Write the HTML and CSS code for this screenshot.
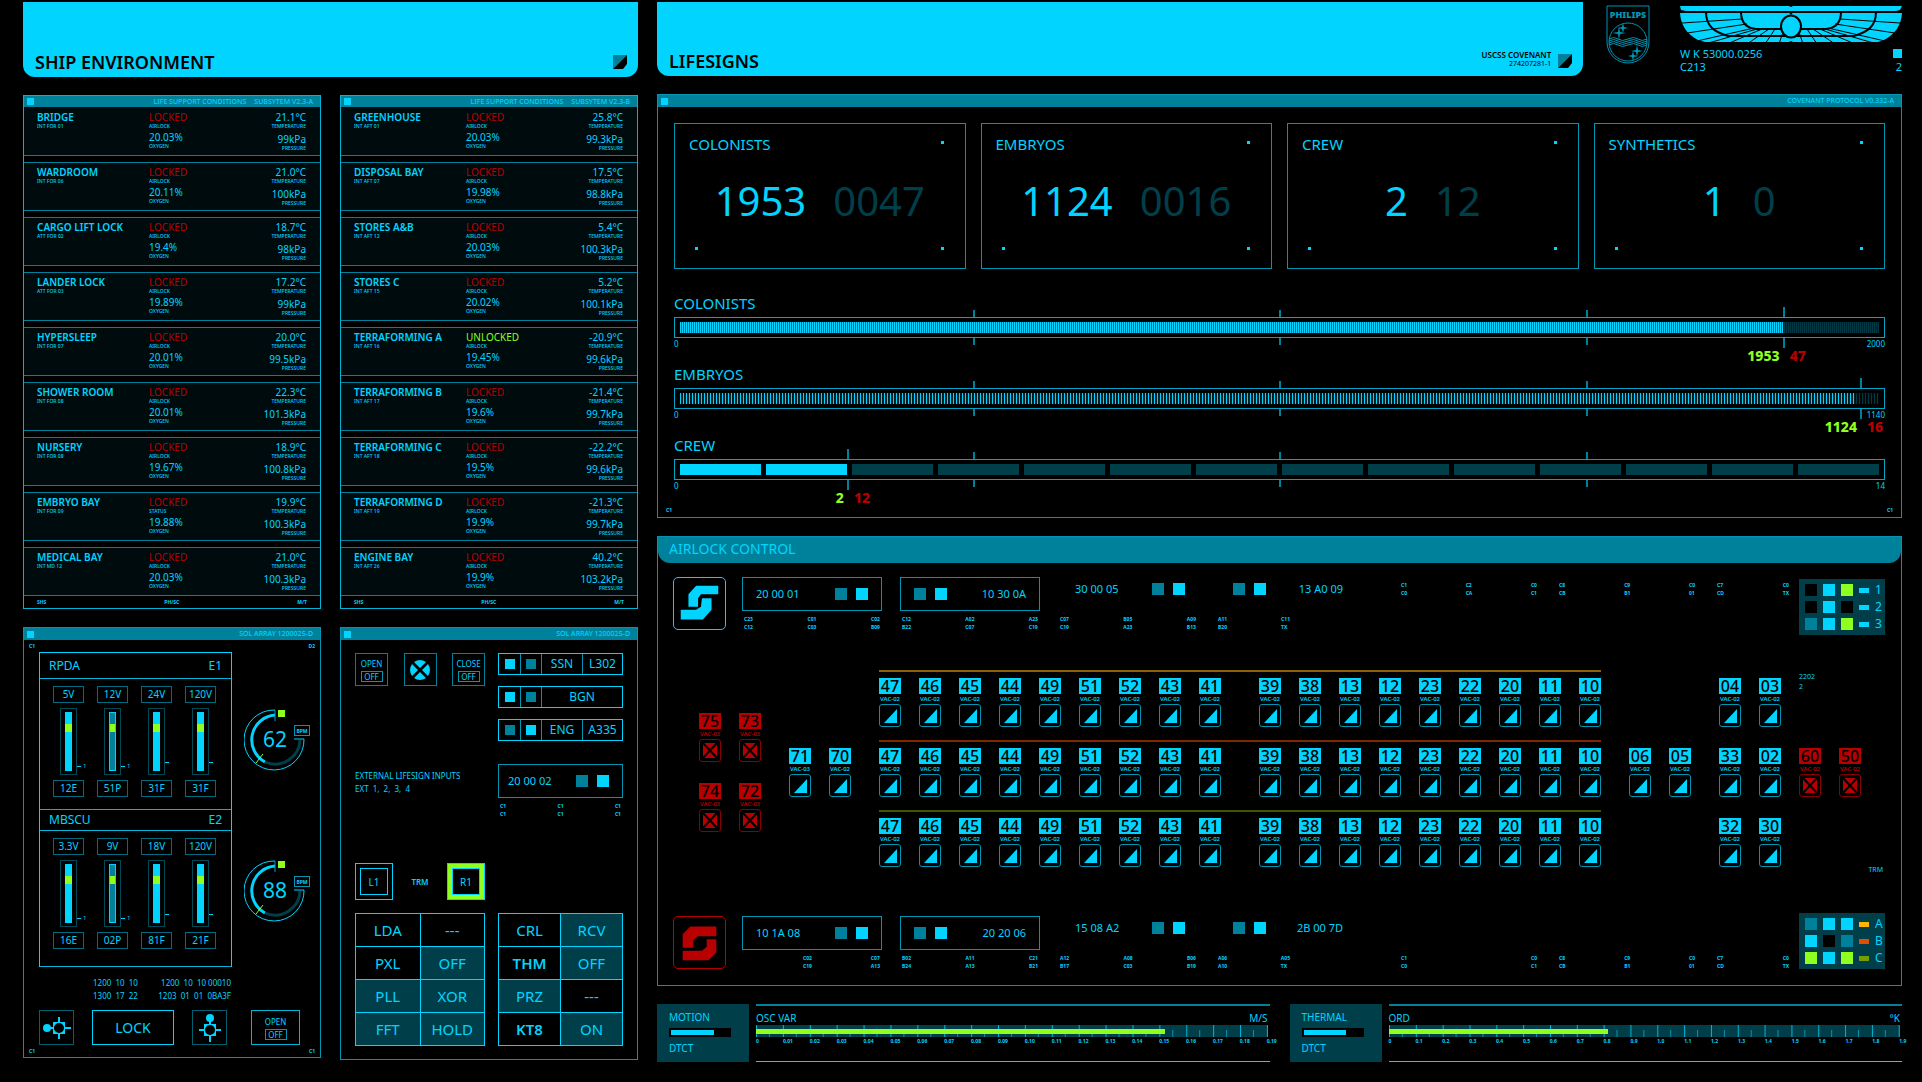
FILE: index.html
```html
<!DOCTYPE html>
<html lang="en">
<head>
<meta charset="utf-8">
<title>Lifesigns</title>
<link rel="stylesheet" href="styles.css">
</head>
<body>
<svg class="defs" width="0" height="0" aria-hidden="true">
  <symbol id="corner" viewBox="0 0 14 14"><path d="M0 0h14L0 14z" fill="#00819b"/><path d="M14 0v9l-4 5H0z" fill="#000"/></symbol>
  <symbol id="port" viewBox="0 0 34 34">
    <circle cx="7" cy="17" r="4"/><path d="M10 16h4v2h-4zM18 6h2v5h-2zM18 23h2v5h-2zM25 16h6v2h-6z"/>
    <path fill-rule="evenodd" d="M13 11h12v12H13zM19 12a5 5 0 1 0 0 10a5 5 0 1 0 0-10z"/>
  </symbol>
</svg>
<main class="console">
  <section class="side">
    <header class="banner">
      <h1>SHIP ENVIRONMENT</h1>
      <svg class="corner"><use href="#corner"/></svg>
    </header>
    <div class="pair">
      <section class="panel env" data-env="a">
        <h2 class="bar"><i class="pip"></i><span>LIFE SUPPORT CONDITIONS</span><span>SUBSYTEM V2.3-A</span></h2>
        <div class="rooms"></div>
        <div class="foot"><span>SHS</span><span>PH/SC</span><span>M/T</span></div>
      </section>
      <section class="panel env" data-env="b">
        <h2 class="bar"><i class="pip"></i><span>LIFE SUPPORT CONDITIONS</span><span>SUBSYTEM V2.3-B</span></h2>
        <div class="rooms"></div>
        <div class="foot"><span>SHS</span><span>PH/SC</span><span>M/T</span></div>
      </section>
    </div>
    <div class="pair sol">
      <section class="panel">
        <h2 class="bar"><i class="pip"></i><span>SOL ARRAY 1200025-D</span></h2>
        <div class="marks"><span>C1</span><span>D2</span></div>
        <div class="power">
          <div class="rack">
            <h3><span>RPDA</span><span>E1</span></h3>
            <div class="faders" data-faders="5V,12E|12V,51P|24V,31F|120V,31F"></div>
            <h3><span>MBSCU</span><span>E2</span></h3>
            <div class="faders" data-faders="3.3V,16E|9V,02P|18V,81F|120V,21F"></div>
          </div>
          <div class="dials">
            <svg viewBox="0 0 68 62"><use href="#dial"/><text class="dial-value" x="31" y="38" text-anchor="middle">62</text></svg>
            <svg viewBox="0 0 68 62">
              <g id="dial">
                <path d="M31 1A30 30 0 1 0 60 30H50" fill="none" stroke="#00d4ff"/>
                <path d="M31 6A25 25 0 0 0 21 53" fill="none" stroke="#00d4ff" stroke-width="3"/>
                <path d="M31 1v11" stroke="#00a0c0"/>
                <path d="M21 53A25 25 0 0 0 56 31" fill="none" stroke="#003f4a" stroke-width="3"/>
                <path d="M12 54l7-9" stroke="#8fff1f"/>
                <rect x="34" y="1" width="7" height="7" fill="#8fff1f"/>
                <rect x="50.500" y="16.500" width="15" height="10" fill="#000" stroke="#0095b3"/>
                <text class="dial-unit" x="58" y="24" text-anchor="middle">BPM</text>
              </g>
              <text class="dial-value" x="31" y="38" text-anchor="middle">88</text>
            </svg>
          </div>
        </div>
        <div class="serials">
          <p>1200  10  10<br>1300  17  22</p>
          <p>1200  10  10 00010<br>1203  01  01  0BA3F</p>
        </div>
        <div class="controls">
          <button class="key dim" aria-label="Port left"><svg width="34" height="34"><use href="#port"/></svg></button>
          <button class="key lock">LOCK</button>
          <button class="key dim" aria-label="Port up"><svg class="turn" width="34" height="34"><use href="#port"/></svg></button>
          <button class="key toggle wide">OPEN<b>OFF</b></button>
        </div>
        <div class="marks"><span>C1</span><span>C1</span></div>
      </section>
      <section class="panel">
        <h2 class="bar"><i class="pip"></i><span>SOL ARRAY 1200025-D</span></h2>
        <div class="deck">
          <div class="toggles">
            <button class="key toggle">OPEN<b>OFF</b></button>
            <button class="key toggle" aria-label="Fan"><svg width="22" height="22" viewBox="0 0 22 22"><path d="M11 9L5 3Q11-1 17 3zM11 13l6 6q-6 4-12 0zM9 11l-6 6q-4-6 0-12zM13 11l6-6q4 6 0 12z"/></svg></button>
            <button class="key toggle">CLOSE<b>OFF</b></button>
          </div>
          <div class="links">
            <div class="link"><i class="on"></i><i></i><span>SSN</span><span>L302</span></div>
            <div class="link"><i class="on"></i><i></i><span class="both">BGN</span></div>
            <div class="link"><i></i><i class="on"></i><span>ENG</span><span>A335</span></div>
          </div>
          <p class="note">EXTERNAL LIFESIGN INPUTS<br>EXT  1,  2,  3,  4</p>
          <div data-module="20 00 02" data-codes="C1 C1|C1 C1|C1 C1"></div>
          <div class="sides">
            <button class="key square"><b>L1</b></button><span>TRM</span><button class="key square active"><b>R1</b></button>
          </div>
          <div></div>
          <div class="keypad">
            <button>LDA</button><button>---</button><button>PXL</button><button class="set">OFF</button>
            <button class="set">PLL</button><button class="set">XOR</button><button class="set">FFT</button><button class="set">HOLD</button>
          </div>
          <div class="keypad">
            <button>CRL</button><button class="set">RCV</button><button class="strong">THM</button><button class="set">OFF</button>
            <button class="set">PRZ</button><button>---</button><button class="strong">KT8</button><button class="set">ON</button>
          </div>
        </div>
      </section>
    </div>
  </section>

  <section class="main">
    <div class="top">
      <header class="banner">
        <h1>LIFESIGNS</h1>
        <p><b>USCSS COVENANT</b><br>274207281-1</p>
        <svg class="corner"><use href="#corner"/></svg>
      </header>
      <svg class="shield" width="44" height="59" viewBox="0 0 44 59" fill="none" stroke="#0095b3">
        <path d="M1 1h42v36a21 21 0 0 1-42 0z"/>
        <text x="22" y="13" text-anchor="middle">PHILIPS</text>
        <circle cx="22" cy="37" r="19"/>
        <path d="M3 34q5-3 9 0t10 0 10 0 9 0M3 36q5-3 9 0t10 0 10 0 9 0M3 38q5-3 9 0t10 0 10 0 9 0M3 40q5-3 9 0t10 0 10 0 9 0"/>
        <path fill="#0095b3" stroke="none" d="M13 21l1 6 6 1-6 1-1 6-1-6-6-1 6-1zM17 18l1 4 4 1-4 1-1 4-1-4-4-1 4-1zM31 40l1 5 5 1-5 1-1 5-1-5-5-1 5-1zM27 46l1 4 4 1-4 1-1 4-1-4-4-1 4-1z"/>
      </svg>
      <div class="vessel">
        <svg class="wings" viewBox="0 0 222 37">
          <path fill="#00d4ff" d="M0 0h109l2 1 2-1h109l-2 4-4 1H6L1 4zM0 7h222q-1 18-18 27l-6 2h-85l-2-1-2 1H25l-7-2Q1 25 0 7z"/>
          <g fill="none" stroke="#000" stroke-width="2">
            <g id="wing">
              <path d="M26 6c0 14 8 20 22 24h62M61 6c0 10 5 16 15 17h26"/>
              <path stroke-width="1" d="M2 17l60-4M7 27l60-9M17 35l57-13M25 38l52-15M47 38l35-15M67 38l22-15M85 38l10-15M99 38l5-15"/>
            </g>
            <use href="#wing" transform="translate(222 0) scale(-1 1)"/>
          </g>
          <ellipse cx="111" cy="20.500" rx="10" ry="11" fill="#00d4ff" stroke="#000" stroke-width="2"/>
          <path d="M108 5h6l-3 4z"/>
        </svg>
        <div class="ids"><p>W K 53000.0256<br>C213</p><p class="seq"><i></i>2</p></div>
      </div>
    </div>

    <section class="panel life">
      <h2 class="bar"><i class="pip"></i><span>COVENANT PROTOCOL V0.332-A</span></h2>
      <div class="cards">
        <article class="card"><h3>COLONISTS</h3><p><span>1953</span><span>0047</span></p></article>
        <article class="card"><h3>EMBRYOS</h3><p><span>1124</span><span>0016</span></p></article>
        <article class="card"><h3>CREW</h3><p><span>2</span><span>12</span></p></article>
        <article class="card"><h3>SYNTHETICS</h3><p><span>1</span><span>0</span></p></article>
      </div>
      <div class="gauge">
        <h3>COLONISTS</h3>
        <div class="track" style="--at:91.7%"><div class="fill fine"></div><i></i><i></i><i></i><u></u><b>1953</b><em>47</em></div>
        <div class="ends"><span>0</span><span>2000</span></div>
      </div>
      <div class="gauge">
        <h3>EMBRYOS</h3>
        <div class="track" style="--at:98.1%"><div class="fill coarse"></div><i></i><i></i><i></i><u></u><b>1124</b><em>16</em></div>
        <div class="ends"><span>0</span><span>1140</span></div>
      </div>
      <div class="gauge">
        <h3>CREW</h3>
        <div class="track" style="--at:14.3%"><div class="cells" id="crew"></div><i></i><i></i><i></i><u></u><b>2</b><em>12</em></div>
        <div class="ends"><span>0</span><span>14</span></div>
      </div>
      <div class="marks"><span>C1</span><span>C1</span></div>
    </section>

    <section class="panel airlock">
      <h2>AIRLOCK CONTROL</h2>
      <div class="strip">
        <svg class="badge" viewBox="0 0 53 53"><path d="M15 17l8-9h23v9H28l-3 4v9H15zM29 21h10v12l-9 10H7V33h16l5-3z"/></svg>
        <div data-module="20 00 01" data-codes="C23 C12|C01 C03|C02 B09"></div>
        <div data-module="10 30 0A" class="flip" data-codes="C12 B22|A02 C07|A23 C19"></div>
        <div data-module="30 00 05" class="bare" data-codes="C07 C19|B05 A23|A09 B13"></div>
        <div data-module="13 A0 09" class="bare flip last" data-codes="A11 B20|C11 TX"></div>
        <div class="buses">
          <div class="codes" data-codes="C1 C0|C2 CA|C0 C1"></div>
          <div class="codes" data-codes="C8 CB|C9 B1|C0 01"></div>
          <div class="codes short" data-codes="C7 CD|C0 TX"></div>
        </div>
        <div class="matrix" data-matrix="kcg,c,1|kck,c,2|tcg,c,3"></div>
      </div>
      <div class="plan" id="plan"></div>
      <div class="strip lower">
        <svg class="badge alert" viewBox="0 0 53 53"><path d="M9 18l8-8h27v10H25l-5 4v8H9zM34 23h10v14l-8 8H9V35h20l5-4z"/></svg>
        <div data-module="10 1A 08" data-codes="|C02 C19|C07 A13"></div>
        <div data-module="20 20 06" class="flip" data-codes="B02 B24|A11 A13|C21 B21"></div>
        <div data-module="15 08 A2" class="bare" data-codes="A12 B17|A08 C03|B06 B19"></div>
        <div data-module="2B 00 7D" class="bare flip last" data-codes="A06 A10|A05 TX"></div>
        <div class="buses">
          <div class="codes" data-codes="C1 C0||C0 C1"></div>
          <div class="codes" data-codes="C8 CB|C9 B1|C0 01"></div>
          <div class="codes short" data-codes="C7 CD|C0 TX"></div>
        </div>
        <div class="matrix" data-matrix="tcc,a,A|ckt,o,B|gcg,v,C"></div>
      </div>
    </section>

    <div class="detectors">
      <section class="detector">
        <div class="tag"><h3>MOTION</h3><div class="level"><i></i></div><p>DTCT</p></div>
        <div class="scale"><p><span>OSC VAR</span><span>M/S</span></p><div class="ruler"><i style="width:80%"></i></div><div class="ticks" data-step="0.01"></div></div>
      </section>
      <section class="detector">
        <div class="tag"><h3>THERMAL</h3><div class="level"><i></i></div><p>DTCT</p></div>
        <div class="scale"><p><span>ORD</span><span>°K</span></p><div class="ruler"><i style="width:43%"></i></div><div class="ticks" data-step="0.1"></div></div>
      </section>
    </div>
  </section>
</main>
<script src="app.js"></script>
</body>
</html>
```
FILE: styles.css
```css
:root {
  --cyan: #00d4ff;
  --line: #0095b3;
  --teal: #00819b;
  --deep: #003f4a;
  --green: #8fff1f;
  --red: #b80000;
}
* { box-sizing: border-box; }
body {
  margin: 0;
  background: #000;
  color: var(--cyan);
  font-family: "Noto Sans", "Open Sans", sans-serif;
  font-size: 10px;
  line-height: 12px;
}
h1, h2, h3, p { margin: 0; font-weight: 400; font-size: inherit; }
i, em { font-style: normal; }
button { font: inherit; color: inherit; background: none; padding: 0; border: 1px solid var(--line); }
.defs { position: absolute; }
.console {
  display: grid;
  grid-template-columns: 615fr 1245fr;
  gap: 19px;
  padding: 2px 20px 20px 23px;
}
.side, .main { display: flex; flex-direction: column; gap: 18px; min-width: 0; }
.banner {
  display: flex;
  align-items: flex-end;
  justify-content: space-between;
  gap: 7px;
  height: 75px;
  padding: 0 11px 8px 12px;
  background: var(--cyan);
  color: #000;
  border-radius: 0 0 12px 12px;
}
.banner h1 { flex: 1; font-size: 18px; line-height: 14px; font-weight: 600; }
.banner p { font-size: 7px; line-height: 8px; text-align: right; }
.banner b { font-size: 8px; font-weight: 600; }
.corner { width: 14px; height: 14px; }

.pair { display: grid; grid-template-columns: 1fr 1fr; gap: 19px; align-items: start; }
.panel { border: 1px solid var(--line); }
.env { border-color: #00b4d8; }
.bar {
  display: flex;
  justify-content: flex-end;
  align-items: center;
  gap: 8px;
  height: 12px;
  padding: 0 7px 0 3px;
  background: var(--teal);
  font-size: 7px;
  line-height: 12px;
  font-weight: 500;
}
.env .bar { height: 11px; }
.pip { width: 7px; height: 7px; margin-right: auto; background: var(--cyan); }

/* Life support rooms */
.rooms { display: grid; gap: 6px; }
.room {
  display: grid;
  grid-template-columns: 112px 1fr auto;
  height: 49px;
  padding: 3px 14px 0 13px;
  border: solid var(--teal);
  border-width: 1px 0;
  background: #000b0e;
}
.room:first-child { border-top-color: transparent; }
.room h3 { font-weight: 600; }
.room small { display: block; font-size: 5px; line-height: 6px; font-weight: 500; }
.room .air { margin-top: 2px; }
.room .kpa { margin-top: 4px; }
.room div:last-child { text-align: right; }
.locked { color: var(--red); }
.unlocked { color: var(--green); }
.foot { display: flex; justify-content: space-between; padding: 0 13px; font-size: 5px; line-height: 12px; font-weight: 700; }

/* Power panel */
.marks { display: flex; justify-content: space-between; padding: 0 5px; font-size: 5px; line-height: 12px; font-weight: 700; }
.power { display: flex; gap: 12px; padding-left: 15px; }
.rack { width: 193px; border: 1px solid var(--cyan); border-bottom: 0; }
.rack h3 {
  display: flex;
  justify-content: space-between;
  height: 21px;
  padding: 0 9px;
  border-bottom: 1px solid #00b4d8;
  font-size: 12px;
  line-height: 20px;
}
.rack h3:first-child { height: 26px; line-height: 25px; }
.faders { display: flex; justify-content: space-between; padding: 7px 15px 12px 13px; border-bottom: 1px solid #00b4d8; }
.faders:last-child { padding-bottom: 17px; }
.fader { display: grid; gap: 5px; width: 31px; justify-items: center; font-size: 10px; }
.fader output, .fader label { width: 31px; height: 17px; border: 1px solid #006b80; line-height: 15px; text-align: center; }
.slot { position: relative; width: 17px; height: 67px; padding: 3px 4px; border: 1px solid #004a57; }
.slot input {
  appearance: none;
  display: block;
  writing-mode: vertical-lr;
  direction: rtl;
  width: 7px;
  height: 59px;
  margin: 0;
  background: var(--cyan);
}
.slot input::-webkit-slider-thumb { appearance: none; width: 7px; height: 8px; background: var(--green); }
.fader.half input { background: var(--teal); outline: 1px solid var(--cyan); outline-offset: -1px; }
.slot span { position: absolute; left: 16px; top: 53px; font-size: 6px; line-height: 8px; display: flex; align-items: center; gap: 2px; }
.slot span::before { content: ""; width: 4px; height: 1px; background: var(--cyan); }
.dials { display: grid; padding-top: 12px; }
.dials svg { width: 68px; height: 62px; align-self: center; fill: var(--cyan); }
.dial-value { font-size: 21px; }
.dial-unit { font-size: 5px; font-weight: 700; }
.serials { display: flex; justify-content: space-between; padding: 9px 89px 0 69px; font-size: 8px; line-height: 13px; white-space: pre; }
.serials p:last-child { text-align: right; }
.controls { display: flex; gap: 18px; padding: 8px 20px 0 15px; }
.key.dim { width: 35px; height: 35px; border-color: #00606f; }
.key svg { display: block; margin: auto; fill: var(--cyan); }
.turn { transform: rotate(90deg); }
.lock { width: 82px; font-size: 14px; border-color: var(--cyan); }
.toggle { width: 33px; height: 33px; font-size: 8px; line-height: 11px; border-color: var(--teal); }
.toggle b { display: block; width: 22px; margin: 2px auto 0; border: 1px solid var(--line); font-weight: 400; line-height: 9px; }
.toggle.wide { width: 49px; height: 35px; margin-left: auto; border-color: #00b4d8; }

/* Deck panel */
.deck {
  display: grid;
  grid-template-columns: 130fr 125fr;
  grid-template-rows: 111px 99px 50px auto;
  column-gap: 13px;
  align-items: start;
  padding: 13px 14px 13px;
}
.toggles, .sides { display: flex; justify-content: space-between; align-items: center; }
.links { display: grid; gap: 11px; }
.link { display: grid; grid-template-columns: 21px 21px 41px 1fr; height: 22px; border: 1px solid var(--cyan); font-size: 12px; line-height: 20px; text-align: center; }
.link > * + * { border-left: 1px solid var(--line); }
.link .both { grid-column: 3 / 5; }
.link i { display: grid; place-items: center; }
.link i::after { content: ""; width: 10px; height: 10px; background: var(--teal); }
.link i.on::after { background: var(--cyan); }
.note { padding-top: 5px; font-size: 8px; line-height: 13px; white-space: pre; }
.sides { font-size: 8px; font-weight: 600; }
.square { width: 38px; height: 37px; padding: 4px; border-color: var(--cyan); font-size: 10px; }
.square b { display: grid; place-items: center; height: 27px; border: 1px solid var(--cyan); background: #000; font-weight: 400; }
.square.active { background: var(--green); }
.keypad { display: grid; grid-template-columns: 1fr 1fr; gap: 1px; padding: 1px; background: var(--cyan); }
.keypad button { height: 32px; border: 0; background: #000; font-size: 15px; }
.keypad .set { background: var(--deep); }
.keypad .strong { font-weight: 600; }

/* Module boxes and wiring codes */
.module { display: flex; align-items: center; gap: 9px; height: 34px; padding: 0 13px 0 9px; border: 1px solid var(--line); font-size: 11px; }
.module span { margin-right: auto; }
.module i { width: 12px; height: 12px; background: var(--teal); }
.module i + i { background: var(--cyan); }
.codes { display: flex; justify-content: space-between; font-size: 5px; line-height: 8px; font-weight: 700; }
.module + .codes { padding: 4px 2px 0; }

/* Top right */
.top { display: flex; justify-content: space-between; }
.main .banner { width: 74.4%; height: 74px; }
.shield { margin: 3px 8px 0 0; }
.shield text { font-size: 9px; font-weight: 900; fill: var(--line); stroke: none; }
.vessel { width: 222px; padding-top: 4px; }
.wings { display: block; width: 100%; }
.ids { display: flex; justify-content: space-between; padding-top: 4px; font-size: 11px; line-height: 13px; }
.seq { display: grid; justify-items: end; }
.seq i { width: 9px; height: 9px; margin: 2px 0; background: var(--cyan); }

/* Lifesigns */
.cards { display: grid; grid-template-columns: repeat(4, 1fr); gap: 15px; padding: 16px 16px 21px; }
.card {
  height: 146px;
  padding: 11px 14px;
  border: 1px solid var(--line);
  font-size: 15px;
  line-height: 18px;
  background:
    linear-gradient(var(--cyan), var(--cyan)) right 21px top 17px / 3px 3px no-repeat,
    linear-gradient(var(--cyan), var(--cyan)) right 21px bottom 18px / 3px 3px no-repeat,
    linear-gradient(var(--cyan), var(--cyan)) left 20px bottom 18px / 3px 3px no-repeat;
}
.card p { display: flex; justify-content: center; gap: 27px; padding-top: 24px; font-size: 40px; line-height: 48px; }
.card p span + span { color: var(--deep); }
.gauge { padding: 3px 16px; }
.gauge h3 { font-size: 15px; line-height: 20px; padding-bottom: 4px; }
.track { position: relative; height: 21px; padding: 4px 5px; border: 1px solid #00a5c7; }
.fill { height: 11px; }
.fine { background: linear-gradient(90deg, transparent 92%, #000b 92%), repeating-linear-gradient(90deg, var(--cyan) 0 1px, #006b80 1px 2px); }
.coarse { background: linear-gradient(90deg, transparent 98%, #000b 98%), repeating-linear-gradient(90deg, var(--cyan) 0 1px, #002026 1px 3px); }
.cells { display: grid; grid-template-columns: repeat(14, 1fr); gap: 5px; height: 11px; }
.cells span { background: var(--deep); }
.cells span:nth-child(-n+2) { background: var(--cyan); }
.track > i, .track > u {
  position: absolute;
  top: -8px;
  bottom: -8px;
  width: 2px;
  margin-left: -1px;
  background: linear-gradient(var(--teal) 7px, transparent 7px calc(100% - 7px), var(--teal) calc(100% - 7px));
}
.track > i:nth-of-type(1) { left: 24.7%; }
.track > i:nth-of-type(2) { left: 50%; }
.track > i:nth-of-type(3) { left: 75.4%; }
.track > u {
  left: var(--at);
  top: -11px;
  bottom: -11px;
  background: linear-gradient(var(--teal) 10px, transparent 10px calc(100% - 10px), var(--teal) calc(100% - 10px));
}
.track b, .track em { position: absolute; top: 29px; font-size: 14px; line-height: 18px; font-weight: 800; }
.track b { right: calc(100% - var(--at) + 4px); color: var(--green); }
.track em { left: calc(var(--at) + 6px); color: var(--red); }
.ends { display: flex; justify-content: space-between; font-size: 8px; line-height: 11px; padding-bottom: 9px; }
.life .marks { padding: 0 8px; line-height: 14px; }

/* Airlock */
.airlock > h2 { height: 26px; padding-left: 11px; border-radius: 0 0 12px 12px; background: var(--teal); font-size: 14px; line-height: 24px; }
.strip { display: flex; padding: 14px 16px 0 15px; }
.badge { width: 53px; height: 53px; margin-right: 16px; border: 1px solid var(--cyan); border-radius: 5px; fill: var(--cyan); }
.badge.alert { border-color: var(--red); fill: var(--red); }
.strip > [data-module] { width: 140px; margin-right: 18px; }
.strip .module { padding: 0 13px; }
.flip .module { flex-direction: row-reverse; }
.flip .module span { margin: 0 0 0 auto; }
.flip .module i { background: var(--cyan); }
.flip .module i + i { background: var(--teal); }
.strip .bare .module { height: 24px; margin-bottom: 10px; padding: 0 13px 0 17px; border: 0; }
.strip > .last { width: 140px; margin-right: 45px; }
.last .codes { width: 76px; }
.buses { display: flex; gap: 22px; padding-top: 4px; }
.buses .codes { width: 136px; }
.buses .codes.short { width: 72px; }
.matrix { display: grid; gap: 5px; align-content: center; height: 56px; margin: 2px 0 0 auto; padding: 0 3px 0 6px; background: var(--deep); font-size: 12px; line-height: 12px; }
.matrix div { display: flex; align-items: center; gap: 6px; }
.matrix i { width: 12px; height: 12px; }
.matrix u { width: 10px; height: 5px; }
.matrix span { width: 7px; text-align: center; }
.k { background: #000; } .c { background: var(--cyan); } .t { background: var(--teal); } .g { background: var(--green); }
.a { background: #ffb400; } .o { background: #dc5000; } .v { background: #73a000; }
.lower { padding: 41px 16px 15px 15px; }
.lower .buses { padding-top: 38px; }
.lower .matrix { margin-top: -3px; }

.plan { display: flex; align-items: center; padding: 35px 0 0 41px; }
.group { display: grid; gap: 21px; margin-right: 28px; }
.hull { gap: 0; }
.row { display: flex; gap: 18px; }
.hull .row { padding: 6px 0 13px; border-top: 2px solid #8a6400; }
.hull .row:last-child { padding-bottom: 8px; }
.row .gap { width: 2px; }
.hull .rust { border-color: #7d2800; }
.hull .moss { border-color: #3f5500; }
.node { width: 22px; font-size: 6px; line-height: 10px; text-align: center; white-space: nowrap; }
.node b { display: block; height: 16px; background: var(--cyan); color: #000; font-size: 16px; line-height: 16px; font-weight: 500; }
.node span { display: flex; justify-content: center; font-weight: 600; }
.node svg { display: block; width: 22px; height: 23px; border: 1px solid var(--line); border-radius: 3px; fill: var(--cyan); }
.node.shut { color: var(--red); }
.node.shut b { background: var(--red); }
.node.shut svg { border-color: #8a0000; fill: var(--red); stroke: #000; }
.stern { margin-right: 18px; }
.tail { display: flex; flex-direction: column; align-self: stretch; justify-content: space-between; flex: 1; font-size: 7px; line-height: 10px; font-weight: 600; }
.tail p { height: 22px; padding-top: 2px; }
.tail .trm { padding: 12px 18px 0 0; text-align: right; }

/* Detectors */
.detectors { display: grid; grid-template-columns: 1fr 1fr; gap: 20px; }
.detector { display: flex; gap: 7px; }
.tag { width: 92px; height: 58px; padding: 7px 18px 0 12px; background: var(--deep); line-height: 13px; }
.level { height: 9px; margin: 4px 0 5px; padding: 2px; background: #000; }
.level i { display: block; width: 74%; height: 5px; background: var(--cyan); }
.scale { flex: 1; border-top: 2px solid var(--teal); border-bottom: 1px solid var(--cyan); }
.scale p { display: flex; justify-content: space-between; padding: 6px 2px 0 0; line-height: 13px; }
.ruler {
  height: 12px;
  padding-top: 4px;
  margin-right: 2px;
  background:
    linear-gradient(90deg, #00b4d8 1px, transparent 1px) 0 0 / calc((100% - 1px) / 19) 100%,
    linear-gradient(90deg, transparent 13px, var(--line) 13px 14px, transparent 14px) 0 5px / calc((100% - 1px) / 19) 7px repeat-x,
    var(--deep);
}
.ruler i { display: block; height: 5px; background: var(--green); }
.ticks { display: flex; font-size: 5px; line-height: 9px; font-weight: 700; margin-right: 3px; }
.ticks span { flex: 1; width: 0; white-space: nowrap; }
.ticks span:last-child { flex: none; }
```
FILE: app.js
```js
const rooms = {
  a: [
    ['BRIDGE', 'INT FOR 01', '21.1', '20.03', '99'],
    ['WARDROOM', 'INT FOR 06', '21.0', '20.11', '100'],
    ['CARGO LIFT LOCK', 'ATT FOR 02', '18.7', '19.4', '98'],
    ['LANDER LOCK', 'ATT FOR 03', '17.2', '19.89', '99'],
    ['HYPERSLEEP', 'INT FOR 07', '20.0', '20.01', '99.5'],
    ['SHOWER ROOM', 'INT FOR 08', '22.3', '20.01', '101.3'],
    ['NURSERY', 'INT FOR 08', '18.9', '19.67', '100.8'],
    ['EMBRYO BAY', 'INT FOR 09', '19.9', '19.88', '100.3', 'STATUS'],
    ['MEDICAL BAY', 'INT MD 12', '21.0', '20.03', '100.3'],
  ],
  b: [
    ['GREENHOUSE', 'INT AFT 01', '25.8', '20.03', '99.3'],
    ['DISPOSAL BAY', 'INT AFT 07', '17.5', '19.98', '98.8'],
    ['STORES A&amp;B', 'INT AFT 12', '5.4', '20.03', '100.3'],
    ['STORES C', 'INT AFT 15', '5.2', '20.02', '100.1'],
    ['TERRAFORMING A', 'INT AFT 16', '-20.9', '19.45', '99.6'],
    ['TERRAFORMING B', 'INT AFT 17', '-21.4', '19.6', '99.7'],
    ['TERRAFORMING C', 'INT AFT 18', '-22.2', '19.5', '99.6'],
    ['TERRAFORMING D', 'INT AFT 19', '-21.3', '19.9', '99.7'],
    ['ENGINE BAY', 'INT AFT 26', '40.2', '19.9', '103.2'],
  ],
};
const all = (selector, fn) => document.querySelectorAll(selector).forEach(fn);

all('[data-env]', (panel) => {
  panel.querySelector('.rooms').innerHTML = rooms[panel.dataset.env].map(([name, code, temp, air, kpa, label]) => {
    const open = name === 'TERRAFORMING A';
    return `<article class="room"><div><h3>${name}</h3><small>${code}</small></div>
      <div><span class="${open ? 'unlocked' : 'locked'}">${open ? 'UNLOCKED' : 'LOCKED'}</span><small>${label || 'AIRLOCK'}</small>
      <p class="air">${air}%</p><small>OXYGEN</small></div>
      <div><span>${temp}°C</span><small>TEMPERATURE</small><p class="kpa">${kpa}kPa</p><small>PRESSURE</small></div></article>`;
  }).join('');
});

all('[data-faders]', (el, row) => {
  el.innerHTML = el.dataset.faders.split('|').map((pair, i) => {
    const [volts, code] = pair.split(',');
    const id = `fader-${row}-${i}`;
    return `<div class="fader${i === 1 ? ' half' : ''}"><label for="${id}">${volts}</label>
      <div class="slot"><input type="range" id="${id}" value="76"><span>${i < 2 ? '1' : ''}</span></div><output for="${id}">${code}</output></div>`;
  }).join('');
});

all('[data-module]', (el) => {
  el.innerHTML = `<div class="module"><span>${el.dataset.module}</span><i></i><i></i></div><div class="codes" data-codes="${el.dataset.codes}"></div>`;
});
all('.codes', (el) => {
  el.innerHTML = el.dataset.codes.split('|').map((pair) => `<span>${pair.replace(' ', '<br>')}</span>`).join('');
});
all('[data-matrix]', (el) => {
  el.innerHTML = el.dataset.matrix.split('|').map((line) => {
    const [cells, dash, name] = line.split(',');
    return `<div>${[...cells].map((c) => `<i class="${c}"></i>`).join('')}<u class="${dash}"></u><span>${name}</span></div>`;
  }).join('');
});

document.getElementById('crew').innerHTML = '<span></span>'.repeat(14);

all('.ticks', (el) => {
  const step = el.dataset.step;
  const digits = step.length - 2;
  el.innerHTML = Array.from({ length: 20 }, (_, i) => `<span>${i ? (i * step).toFixed(digits) : 0}</span>`).join('');
});

const node = (id, shut, label = 'VAC-02') => `<div class="node${shut ? ' shut' : ''}"><b>${id}</b><span>${label}</span>
  <svg viewBox="0 0 20 21">${shut ? '<path stroke="none" d="M3 3h14v15H3z"/><path stroke-width="2" d="M3 3l14 15M17 3L3 18"/>' : '<path d="M17 4v14H4z"/>'}</svg></div>`;
const line = (ids, shut, label) => `<div class="row">${ids.split(' ').map((id) => id === '|' ? '<div class="gap"></div>' : node(id, shut, label)).join('')}</div>`;
const deck = '47 46 45 44 49 51 52 43 41 | 39 38 13 12 23 22 20 11 10';
document.getElementById('plan').innerHTML = `
  <div class="group">${line('75 73', true, 'VAC-03')}${line('74 72', true, 'VAC-03')}</div>
  <div class="group"><div class="row">${node('71', false, 'VAC-03')}${node('70')}</div></div>
  <div class="group hull">${['amber', 'rust', 'moss'].map((c) => line(deck).replace('"row"', `"row ${c}"`)).join('')}</div>
  <div class="group">${line('06 05')}</div>
  <div class="group stern">${line('04 03')}${line('33 02')}${line('32 30')}</div>
  <div class="tail"><p>2202<br>2</p>${line('60 50', true)}<p class="trm">TRM</p></div>`;
```
